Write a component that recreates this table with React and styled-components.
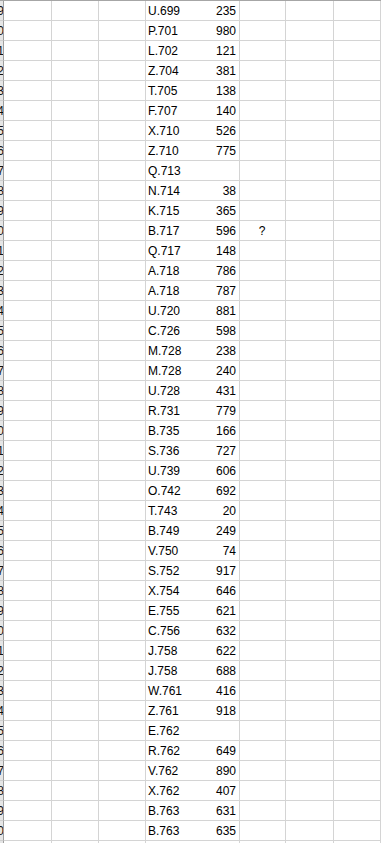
import React from 'react';
import styled, { createGlobalStyle } from 'styled-components';

const rows = [
    ['U.699', 235], ['P.701', 980], ['L.702', 121], ['Z.704', 381], ['T.705', 138],
    ['F.707', 140], ['X.710', 526], ['Z.710', 775], ['Q.713', null], ['N.714', 38],
    ['K.715', 365], ['B.717', 596, '?'], ['Q.717', 148], ['A.718', 786], ['A.718', 787],
    ['U.720', 881], ['C.726', 598], ['M.728', 238], ['M.728', 240], ['U.728', 431],
    ['R.731', 779], ['B.735', 166], ['S.736', 727], ['U.739', 606], ['O.742', 692],
    ['T.743', 20], ['B.749', 249], ['V.750', 74], ['S.752', 917], ['X.754', 646],
    ['E.755', 621], ['C.756', 632], ['J.758', 622], ['J.758', 688], ['W.761', 416],
    ['Z.761', 918], ['E.762', null], ['R.762', 649], ['V.762', 890], ['X.762', 407],
    ['B.763', 631], ['B.763', 635], ['', null],
];

const FIRST_ROW = 29;

const App = () => {
    return (
        <>
            <GlobalStyle />
            <StyledSheet>
                {rows.map(([code, value, note], i) => (
                    <React.Fragment key={i}>
                        <StyledRowHead>
                            <StyledRowNumber>{FIRST_ROW + i}</StyledRowNumber>
                        </StyledRowHead>
                        <StyledCell />
                        <StyledCell />
                        <StyledCell />
                        <StyledCell>
                            <span>{code}</span>
                            <span>{value ?? ''}</span>
                        </StyledCell>
                        <StyledCell $align="center">{note || ''}</StyledCell>
                        <StyledCell />
                        <StyledCell />
                    </React.Fragment>
                ))}
            </StyledSheet>
        </>
    );
};

export default App;

// Styled Components

const GlobalStyle = createGlobalStyle`
    html, body {
        margin: 0;
        padding: 0;
        background: #ffffff;
    }

    body {
        font-family: "Liberation Sans", Arial, sans-serif;
        overflow: hidden;
    }
`;

const StyledSheet = styled.div`
    display: grid;
    grid-template-columns: 4px 48px 47px 47px 94px 46px 48px 47px;
    grid-auto-rows: 20px;
    border-top: 1px solid #a6a6a6;
    width: 381px;
    font-size: 12px;
    color: #000000;
`;

const StyledRowHead = styled.div`
    display: flex;
    justify-content: flex-end;
    align-items: flex-end;
    overflow: hidden;
    background: #e6e6e6;
    border-right: 1px solid #9e9e9e;
    border-bottom: 1px solid #d0d0d0;
    padding-bottom: 2px;
    box-sizing: border-box;
    color: #111111;
    white-space: nowrap;
`;

const StyledRowNumber = styled.span`
    margin-right: -1px;
`;

const StyledCell = styled.div`
    display: flex;
    align-items: flex-end;
    justify-content: ${(p) => (p.$align === 'center' ? 'center' : 'space-between')};
    box-sizing: border-box;
    border-right: 1px solid #d4d4d4;
    border-bottom: 1px solid #d4d4d4;
    padding: 0 3px 1px 2px;
    line-height: 15px;
    white-space: nowrap;
`;
